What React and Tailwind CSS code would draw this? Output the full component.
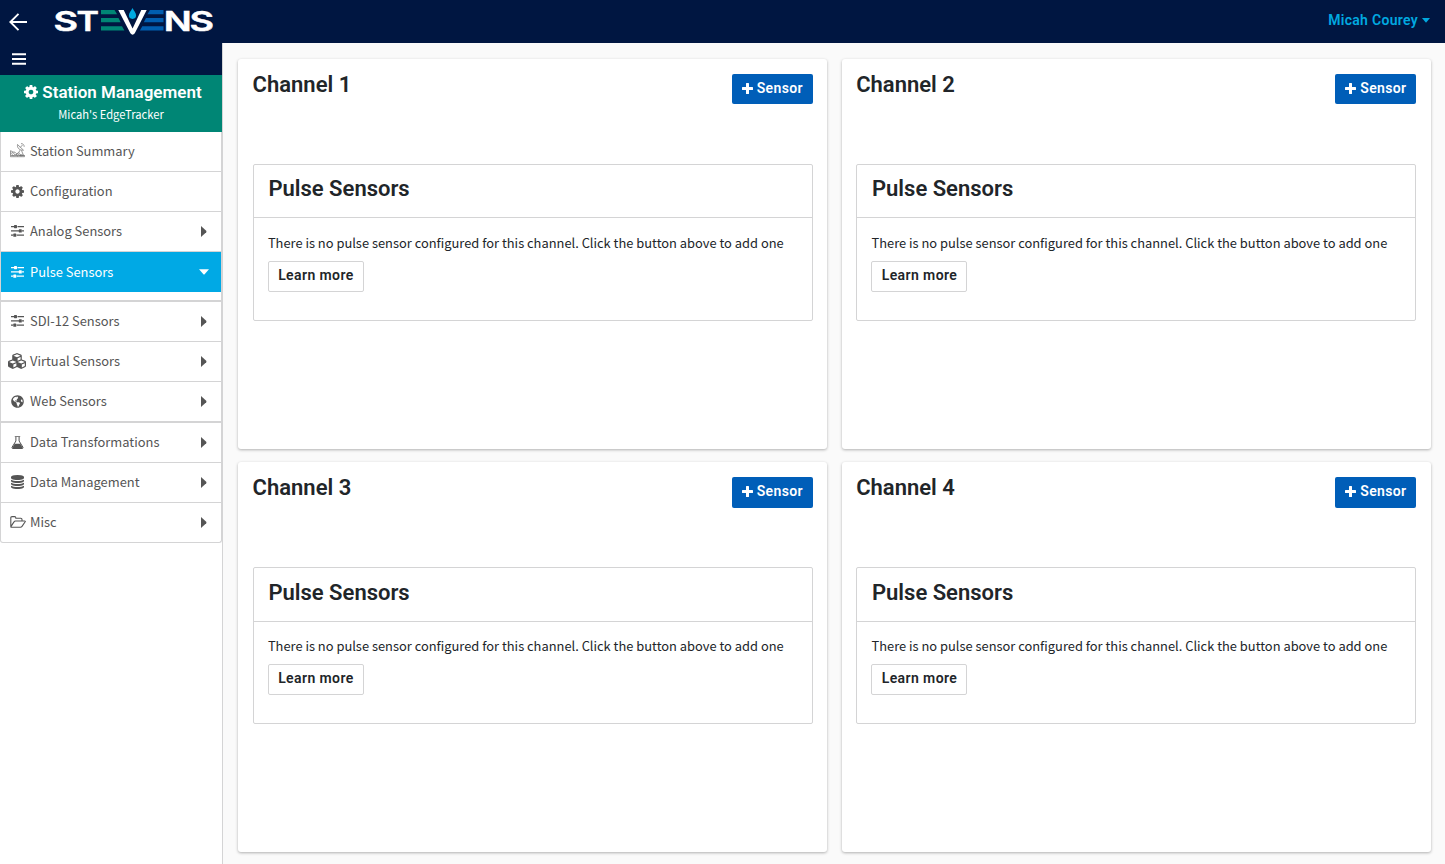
import React from "react";
import { FaCubes, FaGlobeAmericas } from "react-icons/fa";

const COG =
  "M1024 896q0-106-75-181t-181-75-181 75-75 181 75 181 181 75 181-75 75-181zm512-109v222q0 12-8 23t-20 13l-185 28q-19 54-39 91 35 50 107 138 10 12 10 25t-9 23q-27 37-99 108t-94 71q-12 0-26-9l-138-108q-44 23-91 38-16 136-29 186-7 28-36 28h-222q-14 0-24.500-8.500t-11.500-21.500l-28-184q-49-16-90-37l-141 107q-10 9-25 9-14 0-25-11-126-114-165-168-7-10-7-23 0-12 8-23 15-21 51-66.500t54-70.500q-27-50-41-99l-183-27q-13-2-21-12.500t-8-23.500v-222q0-12 8-23t19-13l186-28q14-46 39-92-40-57-107-138-10-12-10-24 0-10 9-23 26-36 98.500-107.500t94.500-71.500q13 0 26 10l138 107q44-23 91-38 16-136 29-186 7-28 36-28h222q14 0 24.500 8.500t11.500 21.500l28 184q49 16 90 37l142-107q9-9 24-9 13 0 25 10 129 119 165 170 7 8 7 22 0 12-8 23-15 21-51 66.500t-54 70.500q26 50 41 98l183 28q13 2 21 12.500t8 23.500z";

const Cog = ({ className }) => (
  <svg className={className} viewBox="0 128 1536 1536" fill="currentColor"><path d={COG} /></svg>
);

const Sliders = () => (
  <svg className="h-3 w-[13px]" viewBox="0 0 13 12" fill="currentColor">
    <path d="M0 1h3v1.200H0zM6.500 1H13v1.200H6.500zM0 5.300h8v1.200H0zM11 5.300h2v1.200h-2zM0 9.600h2.200v1.200H0zM5.700 9.600H13v1.200H5.700z" />
    <rect x="3" y="0" width="3" height="3.200" rx=".6" />
    <rect x="7.800" y="4.300" width="3" height="3.200" rx=".6" />
    <rect x="2.300" y="8.600" width="3" height="3.200" rx=".6" />
  </svg>
);

const Dish = () => (
  <svg className="mb-px h-[15px] w-[15px]" viewBox="0 0 15 15" fill="none" stroke="currentColor" strokeWidth=".7" opacity=".85">
    <path d="M7.500 1.500C7 5 9.500 7.500 13.500 7.200zM10.200 4.500 12.500 2M11 .6c2 0 3.200 1.200 3.200 3.200M10 7.200 8.500 10M11.500 7.500 13.500 12.500" />
    <path d="M.3 7.500 3 9l2 .2 1.500 1.500 2-.7 2 1.500 3.700 1M.5 8v5.700h14V12M.8 10.500 3 9.500 5 12l2.500-1.200 2 1.700 4.500.2M1 12.500h12M2 11.200l1.500 2M6.500 11l1 2.500M10 11.500l1 2" />
  </svg>
);

const Flask = () => (
  <svg className="h-[13px] w-[13px]" viewBox="0 0 13 13">
    <path d="M4.900 1v4L1.200 11c-.5.900-.2 1.500.7 1.500h9.200c.9 0 1.200-.6.7-1.500L8.100 5V1" fill="none" stroke="currentColor" strokeWidth="1" />
    <path d="M3.800 .2h5.400v.9H3.800zM3.700 7.800h5.600L12 12.300H1z" fill="currentColor" />
  </svg>
);

const Folder = () => (
  <svg className="h-3 w-4" viewBox="0 0 16 12" fill="none" stroke="currentColor" strokeWidth="1.100" strokeLinejoin="round">
    <path d="M.8 10.200V1.800Q.8.600 2 .6h2.600q1.200 0 1.200 1.200v.4h5q1.200 0 1.200 1.200V5M.9 10.600 4 5.900Q4.500 5 5.500 5h9.200q1 0 .5.800l-3.200 4.600q-.6.900-1.600.9H1.700q-1.200 0-.8-.7z" />
  </svg>
);

const Database = () => (
  <svg className="h-[14px] w-[13px]" viewBox="0 0 1536 1792" preserveAspectRatio="none" fill="currentColor">
    <path d="M768 768q237 0 443-43t325-127v170q0 69-103 128t-280 93.500-385 34.500-385-34.500T103 896 0 768V598q119 84 325 127t443 43zm0 768q237 0 443-43t325-127v170q0 69-103 128t-280 93.500-385 34.500-385-34.500-280-93.500-103-128v-170q119 84 325 127t443 43zm0-384q237 0 443-43t325-127v170q0 69-103 128t-280 93.500-385 34.500-385-34.500-280-93.500-103-128V982q119 84 325 127t443 43zM768 0q208 0 385 34.500t280 93.500 103 128v128q0 69-103 128t-280 93.500T768 640t-385-34.500T103 512 0 384V256q0-69 103-128t280-93.500T768 0z" />
  </svg>
);

const Caret = ({ open }) =>
  open ? (
    <svg className="h-[6px] w-[10px]" viewBox="0 0 10 6" fill="currentColor"><path d="M0 .3h10L5.600 5.200q-.6.500-1.200 0z" /></svg>
  ) : (
    <svg className="mr-[2px] h-[11px] w-[6px]" viewBox="0 0 6 10" preserveAspectRatio="none" fill="currentColor"><path d="M0 0v10L5.200 5.600q.5-.6 0-1.200z" /></svg>
  );

function Logo() {
  return (
    <svg className="ml-[25px] h-[43px] w-[166px]" viewBox="52 0 166 43">
      <g fill="#fff" stroke="#fff" strokeWidth=".5" fontFamily="Inter, sans-serif" fontWeight="600" fontSize="27.500">
        <text x="53.500" y="30.500" textLength="24.500" lengthAdjust="spacingAndGlyphs">S</text>
        <text x="76.500" y="30.500" textLength="22.500" lengthAdjust="spacingAndGlyphs">T</text>
        <text x="163.800" y="30.500" textLength="28" lengthAdjust="spacingAndGlyphs">N</text>
        <text x="189.500" y="30.500" textLength="24.500" lengthAdjust="spacingAndGlyphs">S</text>
      </g>
      <path d="M101 10h13.500l2.600 4.200H101zM101 18h17.500l2.200 4.200H101zM101 26.200h21l2.400 4.400H101z" fill="#008675" />
      <path d="M163.500 10H150l-2.600 4.200h16.100zM163.500 18H146l-2.200 4.200h19.700zM163.500 26.200h-21.200l-2.400 4.400h23.600z" fill="#005eb0" />
      <path d="M118.300 10h5.400l8.900 18.500L141.300 10h5.400L134.800 33.300q-2.200 2.900-4.400 0z" fill="#fff" />
      <path d="M132.500 8c1.300 3 3.600 4.600 3.600 7.300a3.600 3.600 0 0 1-7.200 0c0-2.700 2.300-4.300 3.600-7.300z" fill="#00a9e0" />
    </svg>
  );
}

const items = [
  { label: "Station Summary", icon: <Dish />, h: "h-10", leaf: true },
  { label: "Configuration", icon: <Cog className="h-[13px] w-[13px]" />, h: "h-10", leaf: true },
  { label: "Analog Sensors", icon: <Sliders />, h: "h-10" },
  { label: "Pulse Sensors", icon: <Sliders />, open: true },
  { label: "SDI-12 Sensors", icon: <Sliders />, h: "h-10" },
  { label: "Virtual Sensors", icon: <FaCubes size={18} className="-ml-[2px] shrink-0" />, h: "h-10" },
  { label: "Web Sensors", icon: <FaGlobeAmericas size={13} />, h: "h-[41px]", thick: true },
  { label: "Data Transformations", icon: <Flask />, h: "h-10" },
  { label: "Data Management", icon: <Database />, h: "h-10" },
  { label: "Misc", icon: <Folder />, h: "h-[39px]", last: true },
];

function NavItem({ item }) {
  if (item.open) {
    return (
      <li>
        <div className="flex h-10 items-center bg-[#00a9e5] pr-[12px] pl-[7px] text-white">
          <span className="flex w-[19px] justify-center">{item.icon}</span>
          <span className="ml-[3px] flex-1">{item.label}</span>
          <Caret open />
        </div>
        <div className="h-[10px] border-b-2 border-[#d4d4d5] bg-white" />
      </li>
    );
  }
  const border = item.last ? "" : item.thick ? "border-b-2" : "border-b";
  return (
    <li className={`flex items-center border-[#d4d4d5] pr-[12px] pl-[7px] ${item.h} ${border}`}>
      <span className="mb-px flex w-[19px] shrink-0 justify-center">{item.icon}</span>
      <span className="mb-[2px] ml-[3px] flex-1">{item.label}</span>
      {!item.leaf && <Caret />}
    </li>
  );
}

const HEAD = "font-[Roboto,sans-serif] font-semibold";

function Channel({ n }) {
  return (
    <section className="h-[390px] rounded-[3px] bg-white px-[14.600px] pt-[15px] shadow-[0_1px_3px_rgba(0,0,0,0.3)]">
      <div className="flex h-[90px] items-start justify-between">
        <h2 className={`${HEAD} text-[22px] leading-[22px]`}>Channel {n}</h2>
        <button className={`${HEAD} flex h-[30.200px] w-[81px] items-center justify-center gap-1 rounded-[2px] bg-[#005eb8] pb-[2px] text-[14px] tracking-[0.35px] text-white`}>
          <svg className="h-[11px] w-[11px]" viewBox="0 0 11 11" fill="currentColor"><path d="M4 .6q0-.6.600-.6h1.800q.6 0 .6.600V4h3.400q.6 0 .6.600v1.800q0 .6-.6.600H7v3.400q0 .6-.6.600H4.600q-.6 0-.6-.6V7H.6Q0 7 0 6.400V4.600Q0 4 .6 4H4z" /></svg>
          Sensor
        </button>
      </div>
      <div className="h-[156.800px] rounded-[2px] border border-[#d4d4d5]">
        <h3 className={`${HEAD} flex h-[53.300px] items-center border-b border-[#d4d4d5] px-[14.800px] pb-[5px] text-[22px]`}>Pulse Sensors</h3>
        <div className="px-[14.300px] pt-[14.800px]">
          <p className="text-[12.880px] leading-5 whitespace-nowrap">There is no pulse sensor configured for this channel. Click the button above to add one</p>
          <button className={`${HEAD} mt-[8px] flex h-[31px] w-24 items-center justify-center rounded-[2px] border border-[#d4d4d5] pb-[2.600px] text-[14px] tracking-[0.4px]`}>Learn more</button>
        </div>
      </div>
    </section>
  );
}

export default function App() {
  return (
    <div className="flex h-[864px] w-[1445px] flex-col overflow-hidden bg-[#fafafa] font-['Noto_Sans_CJK_SC',sans-serif] text-[#212529]">
      <header className="flex h-[43px] shrink-0 items-center bg-[#001641] pr-[15px] pl-[9px]">
        <svg className="h-[18px] w-[18px]" viewBox="0 0 18 18" fill="none" stroke="#fff" strokeWidth="1.900"><path d="M9.500.8 1.300 9l8.200 8.200M1.300 9H18" /></svg>
        <Logo />
        <div className={`${HEAD} mb-[2px] ml-auto flex items-center gap-1 text-[14px] tracking-[0.3px] text-[#00a9e0]`}>
          Micah Courey
          <svg className="h-[5px] w-[8px]" viewBox="0 0 8 5" fill="currentColor"><path d="M0 0h8L4 4.800z" /></svg>
        </div>
      </header>
      <div className="flex min-h-0 flex-1">
        <aside className="w-[223px] shrink-0 border-r border-[#d4d4d5] bg-white">
          <div className="flex h-8 items-center bg-[#001641] pl-3">
            <svg className="h-3 w-[14px]" viewBox="0 0 14 12" fill="#fff"><path d="M0 .2h14v2H0zM0 5h14v2H0zM0 9.800h14v2H0z" /></svg>
          </div>
          <div className="flex h-[57px] flex-col items-center bg-[#008675] pt-[7px] text-white">
            <div className={`${HEAD} flex items-center gap-1 pl-1 text-[17px] leading-5 whitespace-nowrap`}>
              <Cog className="h-[14px] w-[14px]" />
              Station Management
            </div>
            <div className="mt-[3px] text-[11.200px] leading-[18px]">Micah's EdgeTracker</div>
          </div>
          <ul className="rounded-b-[3px] border-x border-b border-[#d4d4d5] text-[12.900px] text-[#555]">
            {items.map((item) => <NavItem key={item.label} item={item} />)}
          </ul>
        </aside>
        <main className="grid flex-1 grid-cols-[589.4px_589.4px] content-start gap-x-[14.200px] gap-y-[13.400px] pt-4 pl-[15px]">
          {[1, 2, 3, 4].map((n) => <Channel key={n} n={n} />)}
        </main>
      </div>
    </div>
  );
}
